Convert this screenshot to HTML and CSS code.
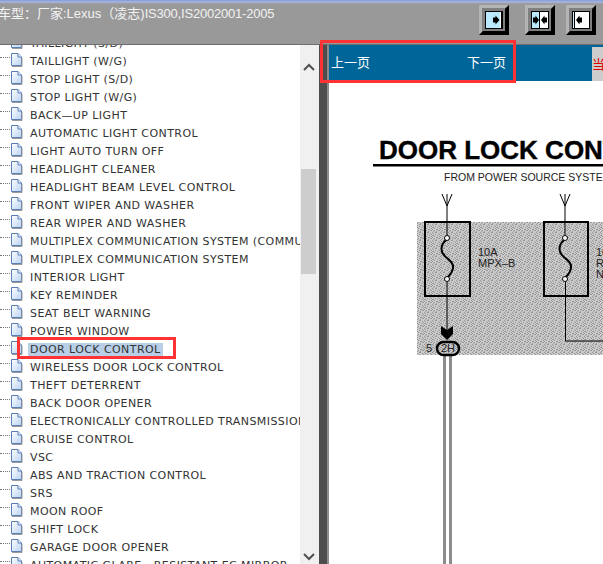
FILE: index.html
```html
<!DOCTYPE html>
<html lang="en">
<head>
    <meta charset="UTF-8">
    <meta name="viewport" content="width=device-width, initial-scale=1.0">
    <title>Wiring Diagram</title>
    <link rel="stylesheet" href="styles.css">
</head>
<body>

    <!-- shared icons -->
    <svg class="defs" width="0" height="0">
        <defs>
            <linearGradient id="pageFill" x1="0" y1="0" x2="1" y2="1">
                <stop offset="0" stop-color="#ffffff"/>
                <stop offset="1" stop-color="#b9d3f2"/>
            </linearGradient>
            <symbol id="pageIcon" viewBox="0 0 13 14">
                <path d="M1.5 .5H8L11.5 4V12.5H1.5Z" fill="url(#pageFill)" stroke="#5b7fb5"/>
                <path d="M8 .5V4H11.5" fill="#e8f0fb" stroke="#5b7fb5"/>
                <path d="M2 13.5H12V5" fill="none" stroke="#9a9a9a"/>
            </symbol>
            <symbol id="btnFrame" viewBox="0 0 30 30">
                <rect width="30" height="30" fill="#808080"/>
                <path d="M0 30 3 27V3H26L30 0H0Z" fill="#b4b4b4"/>
                <path d="M0 30 4 26H26V4L30 0V30Z" fill="#000"/>
                <rect x="6" y="6" width="18" height="18" fill="#000"/>
            </symbol>
            <pattern id="dither" width="8" height="8" patternUnits="userSpaceOnUse">
                <rect width="8" height="8" fill="#cbcbcb"/>
                <path d="M0 0h1v1H0zM3 0h2v1H3zM1 1h1v1H1zM6 1h1v1H6zM3 2h1v1H3zM7 2h1v1H7zM0 3h2v1H0zM5 3h1v1H5zM2 4h1v1H2zM7 4h1v1H7zM4 5h2v1H4zM0 5h1v1H0zM2 6h1v1H2zM6 6h2v1H6zM1 7h1v1H1zM4 7h1v1H4z" fill="#969696"/>
            </pattern>
        </defs>
    </svg>

    <div class="topbar">
        <div class="car-title">车型：厂家:Lexus（凌志)<span class="car-model">IS300,IS2002001-2005</span></div>
        <div class="btn-group">
            <svg class="tool-btn" width="30" height="30" viewBox="0 0 30 30">
                <use href="#btnFrame"/>
                <rect x="7" y="7" width="14" height="16" fill="#b9e8ff"/>
                <rect x="21" y="7" width="1" height="16" fill="#fff"/>
                <path d="M20.5 15 16.5 10.5V12.5H14V17.5H16.5V19.5Z" fill="#000"/>
            </svg>
            <svg class="tool-btn" width="30" height="30" viewBox="0 0 30 30">
                <use href="#btnFrame"/>
                <rect x="7" y="7" width="7" height="16" fill="#b9e8ff"/>
                <rect x="15" y="7" width="8" height="16" fill="#fff"/>
                <path d="M14 15 10.5 10.5V12.5H8V17.5H10.5V19.5Z" fill="#000"/>
                <path d="M16 15 19.500 10.5V12.5H22V17.5H19.5V19.5Z" fill="#000"/>
            </svg>
            <svg class="tool-btn" width="30" height="30" viewBox="0 0 30 30">
                <use href="#btnFrame"/>
                <rect x="7" y="7" width="1" height="16" fill="#d8f2ff"/>
                <rect x="9" y="7" width="14" height="16" fill="#fff"/>
                <path d="M10 15 13.5 10.5V12.5H16V17.5H13.5V19.5Z" fill="#000"/>
            </svg>
        </div>
    </div>

    <div class="main">
        <div class="tree-panel">
            <ul class="tree">
                <li class="tree-row"><svg class="page-icon"><use href="#pageIcon"/></svg><span class="tree-label">TAILLIGHT (S/D)</span></li>
                <li class="tree-row"><svg class="page-icon"><use href="#pageIcon"/></svg><span class="tree-label">TAILLIGHT (W/G)</span></li>
                <li class="tree-row"><svg class="page-icon"><use href="#pageIcon"/></svg><span class="tree-label">STOP LIGHT (S/D)</span></li>
                <li class="tree-row"><svg class="page-icon"><use href="#pageIcon"/></svg><span class="tree-label">STOP LIGHT (W/G)</span></li>
                <li class="tree-row"><svg class="page-icon"><use href="#pageIcon"/></svg><span class="tree-label">BACK—UP LIGHT</span></li>
                <li class="tree-row"><svg class="page-icon"><use href="#pageIcon"/></svg><span class="tree-label">AUTOMATIC LIGHT CONTROL</span></li>
                <li class="tree-row"><svg class="page-icon"><use href="#pageIcon"/></svg><span class="tree-label">LIGHT AUTO TURN OFF</span></li>
                <li class="tree-row"><svg class="page-icon"><use href="#pageIcon"/></svg><span class="tree-label">HEADLIGHT CLEANER</span></li>
                <li class="tree-row"><svg class="page-icon"><use href="#pageIcon"/></svg><span class="tree-label">HEADLIGHT BEAM LEVEL CONTROL</span></li>
                <li class="tree-row"><svg class="page-icon"><use href="#pageIcon"/></svg><span class="tree-label">FRONT WIPER AND WASHER</span></li>
                <li class="tree-row"><svg class="page-icon"><use href="#pageIcon"/></svg><span class="tree-label">REAR WIPER AND WASHER</span></li>
                <li class="tree-row"><svg class="page-icon"><use href="#pageIcon"/></svg><span class="tree-label">MULTIPLEX COMMUNICATION SYSTEM (COMMUTER)</span></li>
                <li class="tree-row"><svg class="page-icon"><use href="#pageIcon"/></svg><span class="tree-label">MULTIPLEX COMMUNICATION SYSTEM</span></li>
                <li class="tree-row"><svg class="page-icon"><use href="#pageIcon"/></svg><span class="tree-label">INTERIOR LIGHT</span></li>
                <li class="tree-row"><svg class="page-icon"><use href="#pageIcon"/></svg><span class="tree-label">KEY REMINDER</span></li>
                <li class="tree-row"><svg class="page-icon"><use href="#pageIcon"/></svg><span class="tree-label">SEAT BELT WARNING</span></li>
                <li class="tree-row"><svg class="page-icon"><use href="#pageIcon"/></svg><span class="tree-label">POWER WINDOW</span></li>
                <li class="tree-row"><svg class="page-icon"><use href="#pageIcon"/></svg><span class="tree-label selected">DOOR LOCK CONTROL</span></li>
                <li class="tree-row"><svg class="page-icon"><use href="#pageIcon"/></svg><span class="tree-label">WIRELESS DOOR LOCK CONTROL</span></li>
                <li class="tree-row"><svg class="page-icon"><use href="#pageIcon"/></svg><span class="tree-label">THEFT DETERRENT</span></li>
                <li class="tree-row"><svg class="page-icon"><use href="#pageIcon"/></svg><span class="tree-label">BACK DOOR OPENER</span></li>
                <li class="tree-row"><svg class="page-icon"><use href="#pageIcon"/></svg><span class="tree-label">ELECTRONICALLY CONTROLLED TRANSMISSION</span></li>
                <li class="tree-row"><svg class="page-icon"><use href="#pageIcon"/></svg><span class="tree-label">CRUISE CONTROL</span></li>
                <li class="tree-row"><svg class="page-icon"><use href="#pageIcon"/></svg><span class="tree-label">VSC</span></li>
                <li class="tree-row"><svg class="page-icon"><use href="#pageIcon"/></svg><span class="tree-label">ABS AND TRACTION CONTROL</span></li>
                <li class="tree-row"><svg class="page-icon"><use href="#pageIcon"/></svg><span class="tree-label">SRS</span></li>
                <li class="tree-row"><svg class="page-icon"><use href="#pageIcon"/></svg><span class="tree-label">MOON ROOF</span></li>
                <li class="tree-row"><svg class="page-icon"><use href="#pageIcon"/></svg><span class="tree-label">SHIFT LOCK</span></li>
                <li class="tree-row"><svg class="page-icon"><use href="#pageIcon"/></svg><span class="tree-label">GARAGE DOOR OPENER</span></li>
                <li class="tree-row"><svg class="page-icon"><use href="#pageIcon"/></svg><span class="tree-label">AUTOMATIC GLARE - RESISTANT EC MIRROR</span></li>
            </ul>
        </div>

        <div class="scrollbar">
            <svg class="scroll-arrow" width="18" height="10" viewBox="0 0 18 10"><path d="M4 8 9 3 14 8" fill="none" stroke="#505050" stroke-width="2"/></svg>
            <div class="scroll-track"><div class="scroll-thumb"></div></div>
            <svg class="scroll-arrow" width="18" height="10" viewBox="0 0 18 10"><path d="M4 2 9 7 14 2" fill="none" stroke="#505050" stroke-width="2"/></svg>
        </div>

        <div class="splitter"></div>

        <div class="viewer">
            <div class="viewer-bar">
                <div class="pager">
                    <span class="pager-link">上一页</span>
                    <span class="pager-link">下一页</span>
                </div>
                <div class="page-box"><span class="page-count">当</span></div>
            </div>
            <div class="sheet">
                <!-- viewBox uses screen coordinates of the sheet -->
                <svg class="diagram" width="274" height="483" viewBox="329 81 274 483">
                    <text class="dg-title" x="379" y="159">DOOR LOCK CONTROL</text>
                    <rect x="373" y="164" width="230" height="2.5" fill="#000"/>
                    <text class="dg-sub" x="444" y="181">FROM POWER SOURCE SYSTEM</text>

                    <rect x="417" y="222" width="186" height="133" fill="url(#dither)"/>

                    <g fill="none" stroke="#000">
                        <path d="M442 194 447 206 452 194M447 194V235"/>
                        <path d="M560 194 565 206 570 194M565 194V235"/>
                    </g>
                    <g fill="none" stroke="#000" stroke-width="2">
                        <rect x="425" y="222" width="45" height="74"/>
                        <rect x="544" y="222" width="44" height="74"/>
                        <path d="M446 240C441 244 440 251 444 255 448 260 454 262 453 268 452.5 272 450 275 448 277"/>
                        <path d="M564 240C559 244 558 251 562 255 566 260 572 262 571 268 570.5 272 568 275 566 277"/>
                        <path d="M447 282V330" stroke-width="1"/>
                        <path d="M565.5 282V341H603" stroke-width="1"/>
                        <circle cx="447" cy="238" r="2.5" fill="#fff" stroke-width="1"/>
                        <circle cx="447" cy="279" r="2.5" fill="#fff" stroke-width="1"/>
                        <circle cx="565" cy="238" r="2.5" fill="#fff" stroke-width="1"/>
                        <circle cx="565" cy="279" r="2.5" fill="#fff" stroke-width="1"/>
                    </g>
                    <path d="M441 326 447 330 453 326V334L447 340 441 334Z" fill="#000"/>
                    <rect x="443" y="355" width="3" height="209" fill="#8c8c8c"/>
                    <rect x="449" y="355" width="3" height="209" fill="#8c8c8c"/>
                    <rect x="437" y="342" width="22" height="13" rx="6.5" fill="url(#dither)" stroke="#000" stroke-width="2.5"/>
                    <text class="dg-small" x="426" y="352">5</text>
                    <text class="dg-small" x="441" y="352">2H</text>
                    <text class="dg-small" x="478" y="256">10A</text>
                    <text class="dg-small" x="478" y="267">MPX–B</text>
                    <text class="dg-small" x="596" y="256">10A</text>
                    <text class="dg-small" x="596" y="267">RADIO</text>
                    <text class="dg-small" x="596" y="278">NO.2</text>
                </svg>
            </div>
        </div>
    </div>

    <!-- red annotation boxes drawn on top of the screenshot -->
    <div class="mark mark-pager"></div>
    <div class="mark mark-row"></div>

</body>
</html>
```

FILE: styles.css
```css
/* General Styles */
html, body {
    height: 100%;
}

body {
    margin: 0;
    width: 603px;
    height: 564px;
    overflow: hidden;
    position: relative;
    display: flex;
    flex-direction: column;
    font-family: 'DejaVu Sans', sans-serif;
    background: #ffffff;
}

.defs {
    position: absolute;
}

/* Top Bar */
.topbar {
    flex: none;
    height: 45px;
    box-sizing: border-box;
    display: flex;
    justify-content: space-between;
    background: linear-gradient(#7f9be0 0, #a9b6de 2px, #999999 4px);
    border-bottom: 1px solid #6e6e6e;
}

.car-title {
    margin: 5px 0 0 -2px;
    font: 13px/17px 'Liberation Sans', 'Noto Sans CJK SC', sans-serif;
    color: #f2f2f2;
    white-space: nowrap;
}

.car-model {
    letter-spacing: -0.2px;
}

.btn-group {
    display: flex;
    gap: 11px;
    padding: 5px 7px 0 0;
}

.tool-btn {
    display: block;
}

.tool-btn:first-child {
    margin-right: 5px;
}

/* Main Area */
.main {
    flex: 1;
    min-height: 0;
    display: flex;
}

.tree-panel {
    flex: none;
    width: 300px;
    overflow: hidden;
}

.tree {
    list-style: none;
    margin: -11px 0 0;
    padding: 0;
}

.tree-row {
    height: 18px;
    display: flex;
    align-items: center;
    padding-left: 10px;
    white-space: nowrap;
    position: relative;
}

/* dotted connector */
.tree-row::before {
    content: "";
    position: absolute;
    left: 0;
    top: 5px;
    width: 10px;
    border-top: 1px dotted #777777;
}

.page-icon {
    flex: none;
    width: 13px;
    height: 14px;
    margin-top: -2px;
}

.tree-label {
    margin-left: 5px;
    padding: 0 2px;
    font-size: 11px;
    line-height: 13px;
    letter-spacing: 0.42px;
    color: #333333;
}

.tree-label.selected {
    background: #b9cfe8;
}

/* Scrollbar */
.scrollbar {
    flex: none;
    width: 19px;
    display: flex;
    flex-direction: column;
    background: #f0f0f0;
}

.scroll-arrow {
    flex: none;
    display: block;
    margin: 17px 0 0;
}

.scrollbar .scroll-arrow:last-child {
    margin: 0 0 2px;
}

.scroll-track {
    flex: 1;
    padding-top: 97px;
}

.scroll-thumb {
    width: 15px;
    height: 105px;
    margin-left: 1px;
    background: #cdcdcd;
}

.splitter {
    flex: none;
    width: 10px;
    box-sizing: border-box;
    background: #4d4d4d;
    border-right: 2px solid #8c8c8c;
}

/* Viewer */
.viewer {
    flex: 1;
    min-width: 0;
    display: flex;
    flex-direction: column;
}

.viewer-bar {
    flex: none;
    height: 36px;
    display: flex;
    justify-content: space-between;
    background: #006699;
}

.pager {
    width: 175px;
    display: flex;
    justify-content: space-between;
    padding: 8px 0 0 2px;
}

.pager-link {
    font: 13px/17px 'Noto Sans CJK SC', sans-serif;
    color: #ffffff;
}

.page-box {
    width: 11px;
    margin-top: 2px;
    background: #cccccc;
    overflow: hidden;
}

.page-count {
    display: block;
    padding-top: 8px;
    font: 13px/17px 'Noto Sans CJK SC', sans-serif;
    color: #e00000;
}

.sheet {
    flex: 1;
    min-height: 0;
    overflow: hidden;
    background: #ffffff;
}

.diagram {
    display: block;
}

.dg-title {
    font: bold 26px 'Liberation Sans', sans-serif;
    fill: #000000;
    stroke: #000000;
    stroke-width: 0.4px;
}

.dg-sub {
    font: 10.5px 'Liberation Sans', sans-serif;
    fill: #222222;
}

.dg-small {
    font: 11px 'Liberation Sans', sans-serif;
    fill: #222222;
}

/* Red annotation boxes */
.mark {
    position: absolute;
    box-sizing: border-box;
    border: 3px solid #ff3333;
}

.mark-pager {
    left: 320px;
    top: 40px;
    width: 196px;
    height: 43px;
}

.mark-row {
    left: 17px;
    top: 337px;
    width: 159px;
    height: 22px;
}
```
